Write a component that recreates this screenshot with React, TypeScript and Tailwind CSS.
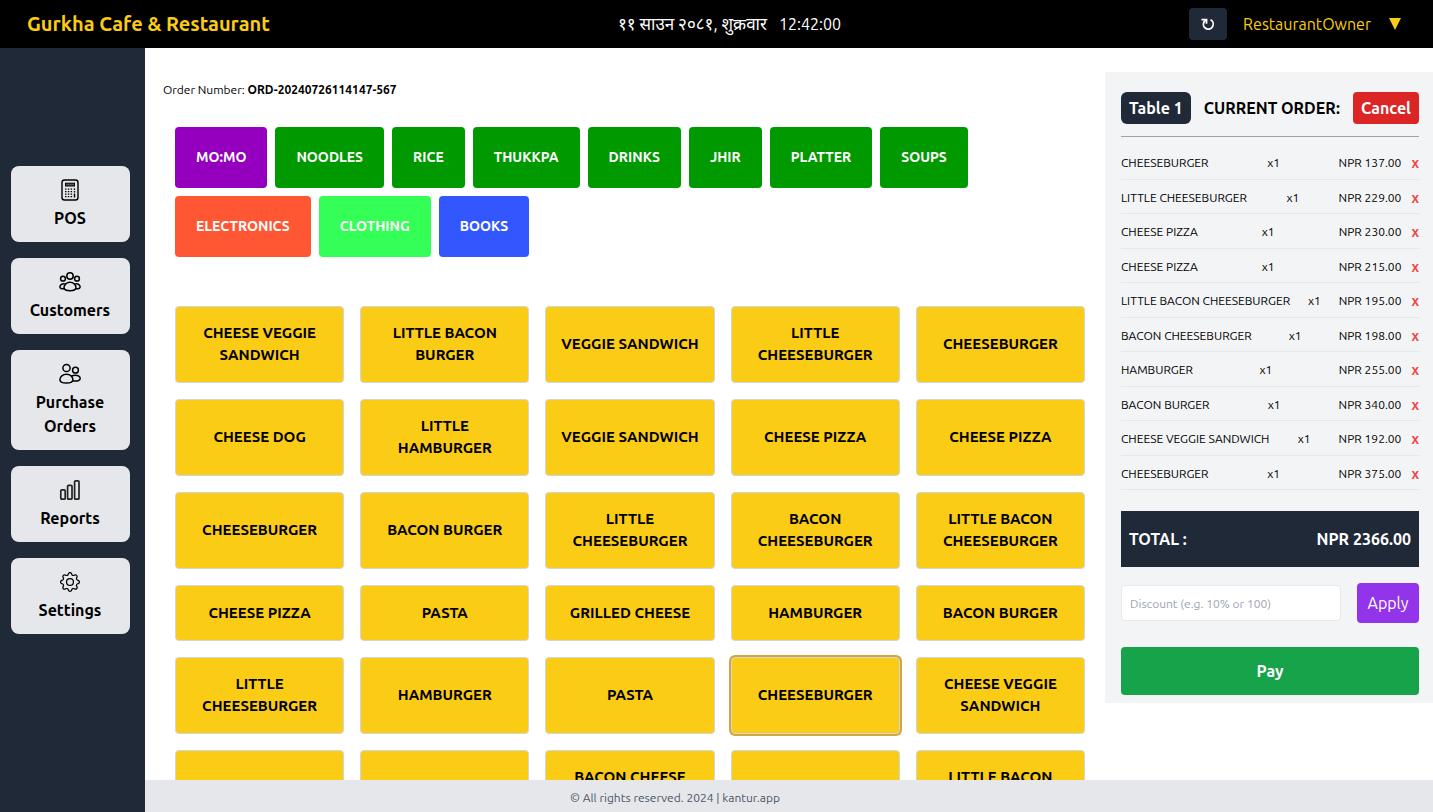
import type { ReactNode } from "react";
import { BsGear } from "react-icons/bs";

const navItems: { label: string; icon: ReactNode }[] = [
  { label: "POS", icon: <CalculatorIcon /> },
  { label: "Customers", icon: <CustomersIcon /> },
  { label: "Purchase Orders", icon: <PurchaseIcon /> },
  { label: "Reports", icon: <ReportsIcon /> },
  { label: "Settings", icon: <BsGear className="h-5 w-5" /> }
];

const categories = [
  { name: "MO:MO", color: "bg-[#9400bd]" },
  { name: "NOODLES", color: "bg-[#009900]" },
  { name: "RICE", color: "bg-[#009900]" },
  { name: "THUKKPA", color: "bg-[#009900]" },
  { name: "DRINKS", color: "bg-[#009900]" },
  { name: "JHIR", color: "bg-[#009900]" },
  { name: "PLATTER", color: "bg-[#009900]" },
  { name: "SOUPS", color: "bg-[#009900]" },
  { name: "ELECTRONICS", color: "bg-[#ff5733]" },
  { name: "CLOTHING", color: "bg-[#33ff57]" },
  { name: "BOOKS", color: "bg-[#3357ff]" }
];

const products = [
  "CHEESE VEGGIE SANDWICH",
  "LITTLE BACON BURGER",
  "VEGGIE SANDWICH",
  "LITTLE CHEESEBURGER",
  "CHEESEBURGER",
  "CHEESE DOG",
  "LITTLE HAMBURGER",
  "VEGGIE SANDWICH",
  "CHEESE PIZZA",
  "CHEESE PIZZA",
  "CHEESEBURGER",
  "BACON BURGER",
  "LITTLE CHEESEBURGER",
  "BACON CHEESEBURGER",
  "LITTLE BACON CHEESEBURGER",
  "CHEESE PIZZA",
  "PASTA",
  "GRILLED CHEESE",
  "HAMBURGER",
  "BACON BURGER",
  "LITTLE CHEESEBURGER",
  "HAMBURGER",
  "PASTA",
  "CHEESEBURGER",
  "CHEESE VEGGIE SANDWICH",
  "HAMBURGER",
  "CHEESE DOG",
  "BACON CHEESE DOG",
  "PASTA",
  "LITTLE BACON BURGER"
];

const selectedProduct = 23;

const orderItems = [
  { name: "CHEESEBURGER", price: 137 },
  { name: "LITTLE CHEESEBURGER", price: 229 },
  { name: "CHEESE PIZZA", price: 230 },
  { name: "CHEESE PIZZA", price: 215 },
  { name: "LITTLE BACON CHEESEBURGER", price: 195 },
  { name: "BACON CHEESEBURGER", price: 198 },
  { name: "HAMBURGER", price: 255 },
  { name: "BACON BURGER", price: 340 },
  { name: "CHEESE VEGGIE SANDWICH", price: 192 },
  { name: "CHEESEBURGER", price: 375 }
];

function CalculatorIcon() {
  return (
    <svg viewBox="0 0 24 24" className="h-6 w-6" fill="none" stroke="currentColor" aria-hidden="true">
      <rect x="4" y="2" width="16" height="20" rx="2.5" strokeWidth="1.4" />
      <rect x="7.5" y="5.2" width="9" height="2.8" fill="#555" strokeWidth="1" />
      <path
        d="M7 11.200h7.500M7 13.700h7.500M7 16.200h7.500M7 18.700h7.500"
        strokeWidth="1.3"
        strokeDasharray="1.5 1.3"
      />
      <path d="M16.500 10.500v1.400M16.500 13v1.400M16.500 15.400v4" strokeWidth="1.4" />
    </svg>
  );
}

function CustomersIcon() {
  return (
    <svg viewBox="0 0 24 24" className="h-6 w-6" fill="none" stroke="currentColor" strokeWidth="1.5" aria-hidden="true">
      <circle cx="12" cy="6" r="3.2" />
      <circle cx="5" cy="8.7" r="2.4" />
      <circle cx="19" cy="8.7" r="2.4" />
      <path d="M12 12.300c3.400 0 6 2.500 6 5.200 0 1.900-2.700 3.200-6 3.200s-6-1.300-6-3.200c0-2.700 2.600-5.200 6-5.200z" />
      <path d="M6.800 13.900c-3.100-.5-4.900 1.200-4.900 3.200 0 1.300 1.500 1.800 4.300 1.700" />
      <path d="M17.200 13.900c3.100-.5 4.900 1.200 4.900 3.200 0 1.300-1.500 1.800-4.300 1.700" />
    </svg>
  );
}

function PurchaseIcon() {
  return (
    <svg viewBox="0 0 24 24" className="h-6 w-6" fill="none" stroke="currentColor" strokeWidth="1.5" aria-hidden="true">
      <circle cx="8.500" cy="6" r="3.600" />
      <circle cx="17.500" cy="8.200" r="2.900" />
      <path d="M8.500 12.300c3.700 0 6.400 2.400 6.400 5.400 0 2.200-2.800 3.300-6.400 3.300s-6.600-1.100-6.600-3.300c0-3 2.900-5.400 6.600-5.400z" />
      <path d="M13.600 14c1.100-.5 2.400-.8 3.700-.8 2.800 0 4.900 1.500 4.900 3.400 0 2.300-2.900 2.600-7.400 2.300" />
    </svg>
  );
}

function ReportsIcon() {
  return (
    <svg viewBox="0 0 24 24" className="h-6 w-6" fill="none" stroke="#222" strokeWidth="1.7" aria-hidden="true">
      <rect x="2.800" y="11.800" width="4.400" height="9.400" rx="1" />
      <rect x="9.600" y="7.300" width="4.400" height="13.900" rx="1" />
      <rect x="16.600" y="2.800" width="4.400" height="18.400" rx="1" />
    </svg>
  );
}

function RefreshIcon() {
  return (
    <svg viewBox="0 0 14 14" className="h-[14px] w-[14px]" fill="none" stroke="currentColor" strokeWidth="1.8" aria-hidden="true">
      <path d="M9.500 2.800A4.900 4.900 0 1 1 2.900 5.100L4.900 2.800" />
      <path d="M.5 2.600h5v4.200" />
    </svg>
  );
}

function Header() {
  return (
    <header className="flex h-12 shrink-0 items-center justify-between bg-black pr-8 pl-[27px]">
      <h1 className="text-xl font-bold text-[#facc15]">Gurkha Cafe &amp; Restaurant</h1>
      <p className="flex items-baseline gap-3 text-white">
        <span className="text-[17px]">११ साउन २०८१, शुक्रवार</span>
        <span>12:42:00</span>
      </p>
      <div className="flex items-center justify-end gap-4">
        <button
          className="flex h-8 w-[38px] items-center justify-center rounded bg-[#1f2937] text-white"
          aria-label="Refresh"
        >
          <RefreshIcon />
        </button>
        <button className="flex items-center gap-[18px] text-[#facc15]">
          RestaurantOwner
          <svg viewBox="0 0 12 12" className="h-3 w-3" fill="currentColor" aria-hidden="true">
            <path d="M0 0h12L6 12z" />
          </svg>
        </button>
      </div>
    </header>
  );
}

function Sidebar() {
  return (
    <nav className="flex w-[145px] shrink-0 flex-col justify-center gap-4 bg-[#1f2937] pr-[15px] pb-[60px] pl-[11px]">
      {navItems.map((item) => (
        <button
          key={item.label}
          className="flex flex-col items-center gap-1 rounded-lg bg-[#e5e7eb] py-3 pr-[13px] pl-3 font-semibold text-black"
        >
          <span className="flex h-6 w-6 items-center justify-center">{item.icon}</span>
          <span className="leading-6">{item.label}</span>
        </button>
      ))}
    </nav>
  );
}

function Menu() {
  return (
    <main className="min-w-0 flex-1 overflow-hidden pt-8 pr-5 pl-[18px]">
      <p className="text-xs leading-5">
        Order Number: <strong>ORD-20240726114147-567</strong>
      </p>
      <div className="mt-[27px] flex flex-wrap gap-2 pr-24 pl-3">
        {categories.map((category) => (
          <button
            key={category.name}
            className={`rounded px-[21px] py-5 text-sm leading-[21px] font-bold text-white ${category.color}`}
          >
            {category.name}
          </button>
        ))}
      </div>
      <div className="mt-[49px] grid grid-cols-5 gap-4 pl-3">
        {products.map((product, index) => (
          <button
            key={index}
            className={`min-h-14 rounded border border-gray-300 bg-[#facc15] px-[14px] pt-[15px] pb-4 text-[15px] leading-[22px] font-semibold text-black ${
              index === selectedProduct ? "ring-2 ring-[#d4a53c]" : ""
            }`}
          >
            {product}
          </button>
        ))}
      </div>
    </main>
  );
}

function CurrentOrder() {
  const total = orderItems.reduce((sum, item) => sum + item.price, 0);

  return (
    <aside className="mt-6 w-[328px] shrink-0 self-start bg-[#f3f4f6] pt-5 pr-[14px] pb-2 pl-4">
      <div className="flex items-center justify-between border-b border-[#9ca3af] pb-3 font-bold">
        <button className="rounded-md bg-[#1f2937] px-2 py-1 text-white">Table 1</button>
        <h2>CURRENT ORDER:</h2>
        <button className="rounded bg-[#dc2626] px-2 py-1 text-white">Cancel</button>
      </div>
      <ul className="mt-2 text-xs">
        {orderItems.map((item, index) => (
          <li
            key={index}
            className="flex items-center justify-between border-b border-[#e5e7eb] pt-[2px] odd:h-[35px] even:h-[34px]"
          >
            <span>{item.name}</span>
            <span>x1</span>
            <span className="flex items-center gap-[10px]">
              NPR {item.price.toFixed(2)}
              <button className="text-sm font-bold text-[#ef4444]" aria-label={`Remove ${item.name}`}>
                x
              </button>
            </span>
          </li>
        ))}
      </ul>
      <div className="mt-[21px] flex h-14 items-center justify-between bg-[#1f2937] px-2 font-bold text-white">
        <span>TOTAL :</span>
        <span>NPR {total.toFixed(2)}</span>
      </div>
      <div className="mt-4 flex items-center gap-4">
        <input
          type="text"
          aria-label="Discount"
          placeholder="Discount (e.g. 10% or 100)"
          className="h-9 min-w-0 flex-1 rounded border border-[#e5e7eb] bg-white px-2 text-xs placeholder:text-[#9ca3af]"
        />
        <button className="h-10 w-[62px] rounded bg-[#9333ea] text-white">Apply</button>
      </div>
      <button className="mt-6 h-12 w-full rounded bg-[#16a34a] font-bold text-white">Pay</button>
    </aside>
  );
}

export default function App() {
  return (
    <div className="flex h-screen flex-col overflow-hidden bg-white font-['Ubuntu','Noto_Sans',sans-serif] text-black">
      <Header />
      <div className="flex min-h-0 flex-1">
        <Sidebar />
        <div className="flex min-w-0 flex-1 flex-col">
          <div className="flex min-h-0 flex-1">
            <Menu />
            <CurrentOrder />
          </div>
          <footer className="h-8 shrink-0 bg-[#e5e7eb] pr-[228px] text-center text-xs leading-9 text-[#4b5563]">
            © All rights reserved. 2024 | kantur.app
          </footer>
        </div>
      </div>
    </div>
  );
}
